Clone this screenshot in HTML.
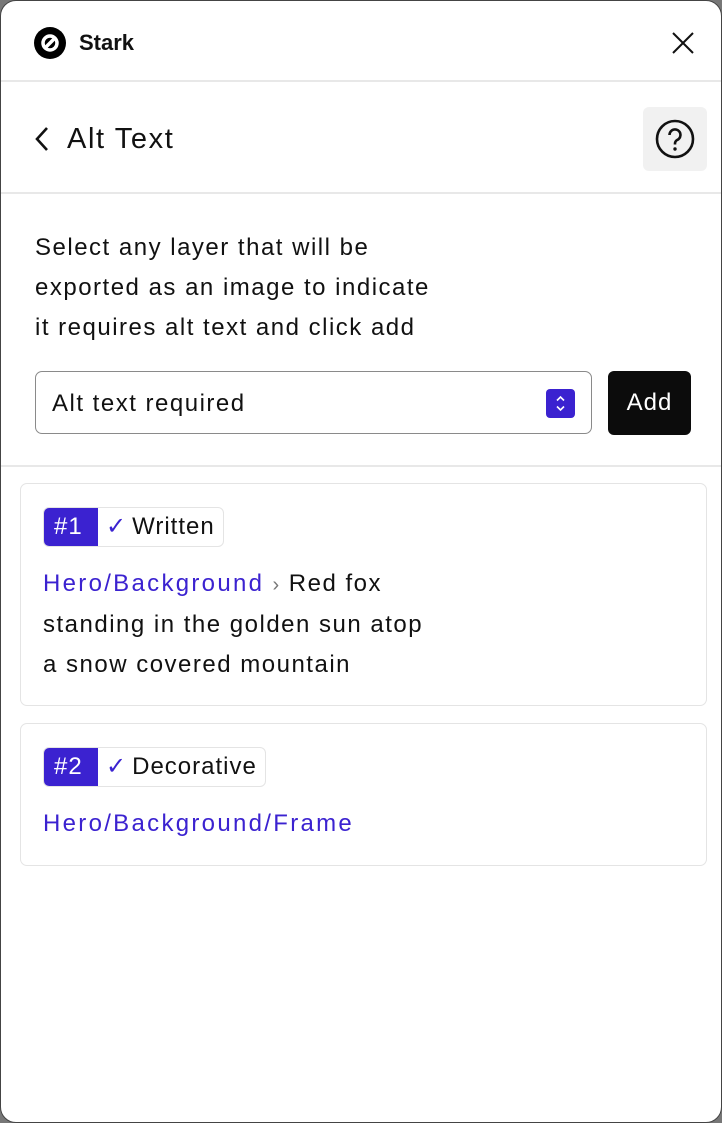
<!DOCTYPE html>
<html><head><meta charset="utf-8"><style>
html,body{margin:0;padding:0;background:#777;}
body{width:722px;height:1123px;overflow:hidden;font-family:"Liberation Sans",sans-serif;color:#111;}
.win{position:absolute;left:0;top:0;width:720px;height:1121px;border:1px solid #444;border-radius:16px;background:#fff;overflow:hidden;}
.abs{position:absolute;}
.hr{position:absolute;left:0;width:722px;height:2px;background:#e8e8e8;}
.t{font-size:24px;line-height:40px;letter-spacing:1.5px;white-space:nowrap;}
.card{position:absolute;left:19px;width:685px;border:1.5px solid #e4e4e4;border-radius:7px;}
.badge{position:absolute;left:22px;height:38px;display:flex;border:1.5px solid #e4e4e4;border-radius:6px;overflow:hidden;font-size:24px;line-height:38px;letter-spacing:1px;}
.num{background:#3b22d0;color:#fff;padding:0 8px 0 10px;width:36px;}
.lab{padding:0 8px;}
.ck{color:#3b22d0;margin-right:5px;}
.pur{color:#3b22d0;letter-spacing:2.3px;}
</style></head><body>
<div class="win">
<svg class="abs" style="left:33px;top:26px" width="32" height="32" viewBox="0 0 32 32"><circle cx="16" cy="16" r="16" fill="#000"/><circle cx="16" cy="16" r="7" fill="none" stroke="#fff" stroke-width="3.5"/><path d="M11 21L21 11" stroke="#fff" stroke-width="3.5"/></svg>
<div class="abs" style="left:78px;top:28px;font-size:22px;font-weight:bold;line-height:28px;">Stark</div>
<svg class="abs" style="left:670px;top:30px" width="24" height="24" viewBox="0 0 24 24"><path d="M2 2L22 22M22 2L2 22" stroke="#111" stroke-width="2"/></svg>
<div class="hr" style="top:79px"></div>
<svg class="abs" style="left:32px;top:125px" width="18" height="26" viewBox="0 0 18 26"><path d="M14 2L4 13L14 24" fill="none" stroke="#111" stroke-width="2.6"/></svg>
<div class="abs" style="left:66px;top:118px;font-size:29px;line-height:40px;letter-spacing:1.6px;">Alt Text</div>
<div class="abs" style="left:642px;top:106px;width:64px;height:64px;background:#f1f1f1;border-radius:6px;"></div>
<svg class="abs" style="left:654px;top:118px" width="40" height="40" viewBox="0 0 40 40"><circle cx="20" cy="20" r="18" fill="none" stroke="#111" stroke-width="2.6"/><path d="M14.5 16a5.5 5.5 0 1 1 8 4.8c-1.6.9-2.5 2-2.5 3.7v1" fill="none" stroke="#111" stroke-width="2.6"/><circle cx="20" cy="30" r="1.7" fill="#111"/></svg>
<div class="hr" style="top:191px"></div>
<div class="abs t" style="left:34px;top:227px;">Select any layer that will be<br>exported as an image to indicate<br>it requires alt text and click add</div>
<div class="abs" style="left:34px;top:370px;width:555px;height:61px;border:1.5px solid #8a8a8a;border-radius:7px;"></div>
<div class="abs t" style="left:51px;top:383px;">Alt text required</div>
<svg class="abs" style="left:545px;top:388px" width="29" height="29" viewBox="0 0 29 29"><rect width="29" height="29" rx="4" fill="#3b22d0"/><path d="M11 11.5L14.5 8L18 11.5M11 17.5L14.5 21L18 17.5" fill="none" stroke="#fff" stroke-width="1.6"/></svg>
<div class="abs" style="left:607px;top:370px;width:83px;height:64px;background:#0c0c0c;border-radius:6px;color:#fff;font-size:24px;line-height:64px;text-align:center;letter-spacing:1px;">Add</div>
<div class="hr" style="top:464px"></div>
<div class="card" style="top:482px;height:221px;">
<div class="badge" style="top:23px;"><span class="num">#1</span><span class="lab"><span class="ck">✓</span>Written</span></div>
<div class="abs t" style="left:22px;top:80px;"><span class="pur">Hero/Background</span> <span style="color:#777;font-size:20px;">›</span> Red fox<br>standing in the golden sun atop<br>a snow covered mountain</div>
</div>
<div class="card" style="top:722px;height:141px;">
<div class="badge" style="top:23px;"><span class="num">#2</span><span class="lab"><span class="ck">✓</span>Decorative</span></div>
<div class="abs t pur" style="left:22px;top:80px;">Hero/Background/Frame</div>
</div>
</div>
</body></html>
